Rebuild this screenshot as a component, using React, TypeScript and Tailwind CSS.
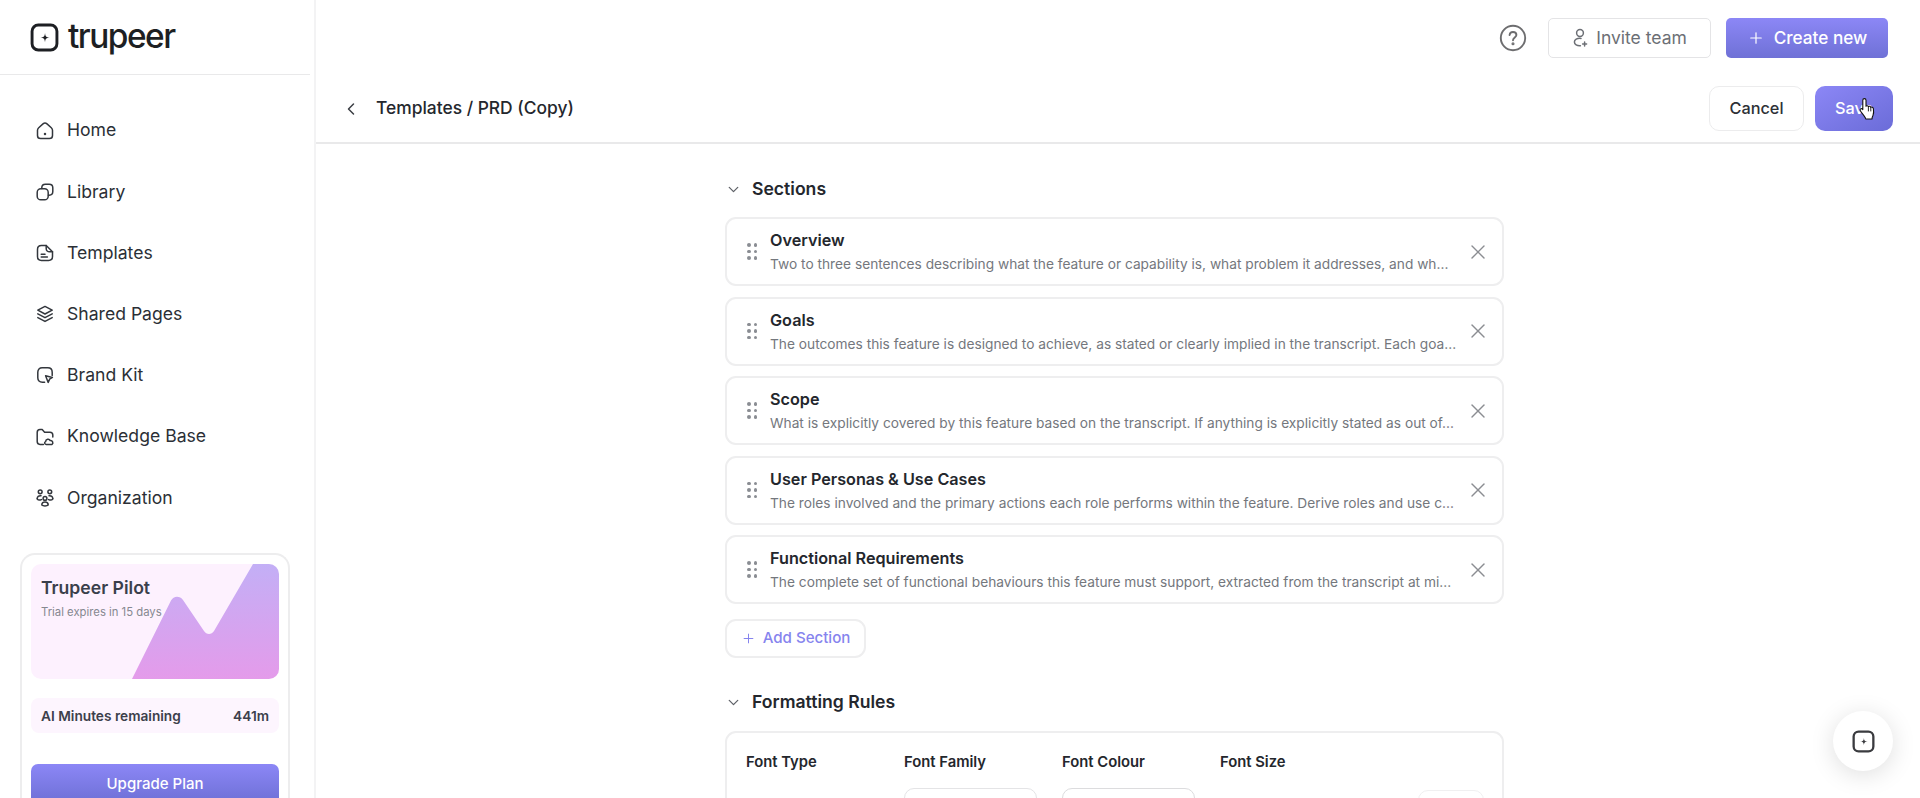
import { ChevronDown, ChevronLeft, Plus, X } from 'lucide-react';
import type { ReactNode } from 'react';

const iconProps = {
  fill: 'none',
  stroke: 'currentColor',
  strokeWidth: 1.5,
  strokeLinecap: 'round' as const,
  strokeLinejoin: 'round' as const,
};

function NavIcon({ children }: { children: ReactNode }) {
  return (
    <svg viewBox="0 0 20 20" className="h-5 w-5 shrink-0 text-[#33373d]" {...iconProps}>
      {children}
    </svg>
  );
}

const navItems: { label: string; icon: ReactNode }[] = [
  {
    label: 'Home',
    icon: (
      <>
        <path d="M2.5 9.2C2.5 8.2 2.9 7.4 3.7 6.7L8 2.9C9.2 1.9 10.8 1.9 12 2.9L16.3 6.7C17.1 7.4 17.5 8.2 17.5 9.2V14.5C17.5 16.5 16.4 17.6 14.4 17.6H5.6C3.6 17.6 2.5 16.5 2.5 14.5Z" />
        <circle cx="10" cy="13" r="0.5" fill="currentColor" />
      </>
    ),
  },
  {
    label: 'Library',
    icon: (
      <>
        <rect x="2.2" y="6.8" width="11" height="11" rx="3.6" />
        <path d="M6.8 6.6V5.8C6.8 3.6 8.4 2.2 10.4 2.2H14.2C16.3 2.2 17.8 3.7 17.8 5.8V9.6C17.8 11.6 16.4 13.2 14.2 13.2H13.4" />
      </>
    ),
  },
  {
    label: 'Templates',
    icon: (
      <>
        <path d="M2.5 6.4C2.5 4 4 2.5 6.4 2.5H11.2L17.5 8.8V13.6C17.5 16 16 17.5 13.6 17.5H6.4C4 17.5 2.5 16 2.5 13.6Z" />
        <path d="M11.2 2.5V5.4C11.2 7.6 12.6 8.8 14.6 8.8H17.5" />
        <path d="M6.2 11.2H10M6.2 14H12.4" />
      </>
    ),
  },
  {
    label: 'Shared Pages',
    icon: (
      <>
        <path d="M10 2.4L17.2 6.2L10 10L2.8 6.2Z" />
        <path d="M2.8 9.9L10 13.7L17.2 9.9" />
        <path d="M2.8 13.6L10 17.4L17.2 13.6" />
      </>
    ),
  },
  {
    label: 'Brand Kit',
    icon: (
      <>
        <path d="M9.6 17.2H7.4C4.4 17.2 2.8 15.6 2.8 12.8V7.2C2.8 4.4 4.4 2.8 7.2 2.8H12.8C15.6 2.8 17.2 4.4 17.2 7.2V10.4" />
        <path d="M10.6 10.8L17.4 12.4L14.6 14.2L13.2 17.4Z" />
      </>
    ),
  },
  {
    label: 'Knowledge Base',
    icon: (
      <>
        <path d="M8.4 17.4H5C3.4 17.4 2.2 16.2 2.2 14.6V5.4C2.2 3.8 3.4 2.6 5 2.6H7.2L9.6 5.2H15C16.6 5.2 17.8 6.4 17.8 8V10" />
        <path d="M11.2 17.4C9.4 17.4 9 15.2 10.6 14.6C10.8 12 14.2 11.4 15.2 13.6C17.4 13.2 18.8 16 17 17.4Z" />
      </>
    ),
  },
  {
    label: 'Organization',
    icon: (
      <>
        <circle cx="5.2" cy="3.8" r="1.9" />
        <circle cx="14.8" cy="3.8" r="1.9" />
        <circle cx="10" cy="10.4" r="1.9" />
        <path d="M2.2 10.8C2.2 8.4 3.6 7.6 6 7.8" />
        <path d="M17.8 10.8C17.8 8.4 16.4 7.6 14 7.8" />
        <path d="M2.2 10.8C3 12 5 12.2 6.4 11.6" />
        <path d="M17.8 10.8C17 12 15 12.2 13.6 11.6" />
        <path d="M6.8 17C6.8 14.8 8.2 14 10 14C11.8 14 13.2 14.8 13.2 17C12 18.2 8 18.2 6.8 17Z" />
      </>
    ),
  },
];

const sections = [
  {
    title: 'Overview',
    text: 'Two to three sentences describing what the feature or capability is, what problem it addresses, and wh...',
  },
  {
    title: 'Goals',
    text: 'The outcomes this feature is designed to achieve, as stated or clearly implied in the transcript. Each goa...',
  },
  {
    title: 'Scope',
    text: 'What is explicitly covered by this feature based on the transcript. If anything is explicitly stated as out of...',
  },
  {
    title: 'User Personas & Use Cases',
    text: 'The roles involved and the primary actions each role performs within the feature. Derive roles and use c...',
  },
  {
    title: 'Functional Requirements',
    text: 'The complete set of functional behaviours this feature must support, extracted from the transcript at mi...',
  },
];

function LogoMark({ className, weight }: { className: string; weight: number }) {
  return (
    <svg viewBox="0 0 28 28" className={className} fill="none">
      <rect x="2" y="2" width="24" height="24" rx="6" stroke="currentColor" strokeWidth={weight} />
      <path
        d="M14.5 9.6C14.9 13 15.6 13.7 19 14.1C15.6 14.5 14.9 15.2 14.5 18.6C14.1 15.2 13.4 14.5 10 14.1C13.4 13.7 14.1 13 14.5 9.6Z"
        fill="currentColor"
      />
    </svg>
  );
}

function DragDots() {
  return (
    <div className="grid shrink-0 grid-cols-2 gap-x-[3px] gap-y-[3px]">
      {[0, 1, 2, 3, 4, 5].map((i) => (
        <span key={i} className="h-[3.5px] w-[3.5px] rounded-full bg-[#8a8d93]" />
      ))}
    </div>
  );
}

function Sidebar() {
  return (
    <aside className="flex h-full w-[316px] shrink-0 flex-col border-r-2 border-[#f3f3f4]">
      <div className="mr-[4px] flex h-[75px] shrink-0 items-center gap-[9px] border-b border-[#e9e9ea] pl-[30px]">
        <LogoMark className="h-[29px] w-[29px] text-[#1d1f23]" weight={2.8} />
        <span className="text-[33.4px] leading-none font-medium tracking-[-0.045em] text-[#1d1f23]">trupeer</span>
      </div>
      <nav className="flex flex-col pt-[25px]">
        {navItems.map((item) => (
          <div key={item.label} className="flex h-[61.2px] items-center gap-[12px] pl-[35px] text-[17.6px] text-[#2b2f36]">
            <NavIcon>{item.icon}</NavIcon>
            {item.label}
          </div>
        ))}
      </nav>
      <div className="mt-[25px] mr-[24px] ml-[20px] flex-1 rounded-t-[15px] border-2 border-b-0 border-[#ededee] px-[9px] pt-[9px]">
        <div className="relative h-[115px] overflow-hidden rounded-[10px] bg-[#fdf1fe]">
          <svg viewBox="0 0 248 115" className="absolute inset-0 h-full w-full">
            <defs>
              <linearGradient id="pilot" x1="0" y1="0" x2="0" y2="1">
                <stop offset="0" stopColor="#c3aff6" />
                <stop offset="1" stopColor="#e49bea" />
              </linearGradient>
            </defs>
            <path
              d="M101 115L140 36.5C142.5 31.5 149 31.5 152 36L173 67C175.5 71 180.5 71 183 67L222 0H248V115Z"
              fill="url(#pilot)"
            />
          </svg>
          <div className="relative pt-[13px] pl-[10px]">
            <div className="text-[17.6px] leading-[22px] font-semibold text-[#3a3f4b]">Trupeer Pilot</div>
            <div className="mt-[6px] text-[11.3px] leading-[15px] text-[#858890]">Trial expires in 15 days</div>
          </div>
        </div>
        <div className="mt-[19px] flex h-[35px] items-center justify-between rounded-[8px] bg-[#fdf5fe] px-[10px] text-[13.7px] font-semibold text-[#3c404b]">
          <span>AI Minutes remaining</span>
          <span>441m</span>
        </div>
        <div className="mt-[31px] flex h-[40px] items-center justify-center rounded-t-[7px] bg-gradient-to-b from-[#8c87f6] to-[#6d6fd5] text-[15px] font-medium text-white">
          Upgrade Plan
        </div>
      </div>
    </aside>
  );
}

function TopBar() {
  return (
    <div className="flex h-[40px] shrink-0 items-center justify-end gap-[15px] pr-[32px]">
      <svg viewBox="0 0 28 28" className="mr-[6px] h-[28px] w-[28px] text-[#6d6d6f]" {...iconProps} strokeWidth={1.9}>
        <circle cx="14" cy="14" r="12.2" />
        <path d="M10.6 11C10.8 9 12.2 8 14 8C16 8 17.4 9.2 17.4 11C17.4 13.4 14 13.6 14 16.2" />
        <circle cx="14" cy="19.8" r="0.6" fill="currentColor" />
      </svg>
      <button className="flex h-[40px] w-[163px] items-center justify-center gap-[8px] rounded-[5px] border border-[#e4e4e6] bg-white text-[17.5px] text-[#6c6f75]">
        <svg viewBox="0 0 16 20" className="h-[20px] w-[16px]" {...iconProps}>
          <circle cx="8" cy="5" r="3.4" />
          <path d="M9 10.4C5 10 2.4 11.6 2.4 14C2.4 16.6 5 18 8.4 17.8" />
          <path d="M12.6 14V18M10.6 16H14.6" />
        </svg>
        Invite team
      </button>
      <button className="flex h-[40px] w-[162px] items-center justify-center gap-[9px] rounded-[5px] bg-gradient-to-b from-[#8c87f6] to-[#6f71d6] text-[17.2px] font-medium text-white">
        <Plus className="h-[18px] w-[18px]" strokeWidth={1.6} />
        Create new
      </button>
    </div>
  );
}

function PageHeader() {
  return (
    <div className="flex h-[86px] shrink-0 items-start justify-between border-b-2 border-[#e9e9ea] pt-[28px] pr-[27px] pl-[25px]">
      <div className="flex h-[45px] items-center gap-[15px] text-[17.4px] font-medium text-[#24272d]">
        <ChevronLeft className="h-[20px] w-[20px] text-[#3b3e44]" strokeWidth={1.8} />
        Templates / PRD (Copy)
      </div>
      <div className="flex gap-[11px]">
        <button className="flex h-[45px] w-[95px] items-center justify-center rounded-[10px] border border-[#ececed] bg-white text-[16.3px] font-medium text-[#2d3036]">
          Cancel
        </button>
        <button className="relative flex h-[45px] w-[78px] items-center justify-center rounded-[10px] bg-gradient-to-br from-[#8c87f6] to-[#6b6cd8] text-[16.3px] font-medium text-white">
          Save
          {/* mouse pointer caught in the recording */}
          <svg viewBox="0 0 18 24" className="absolute top-[11px] left-[44px] h-[24px] w-[18px]">
            <path
              d="M5.4 1.6C6.4 1.6 7 2.3 7 3.2V9.2C7.4 8.6 9 8.6 9.4 9.6C10 9 11.4 9.2 11.8 10.2C12.6 9.8 14.2 10.2 14.4 11.6C14.7 13.8 14.8 16.4 14 18.4C13.4 20 13 20.6 13 22H6.8C6.6 20.6 5.6 19.6 4.4 18C3.2 16.4 1.8 14.6 1.2 13.4C0.6 12.2 2.2 11 3.4 12L3.8 12.6V3.2C3.8 2.3 4.4 1.6 5.4 1.6Z"
              fill="#fff"
              stroke="#111"
              strokeWidth="1.1"
              strokeLinejoin="round"
            />
            <path d="M9.4 10V14M11.8 10.4V14" stroke="#111" strokeWidth="0.9" strokeLinecap="round" />
          </svg>
        </button>
      </div>
    </div>
  );
}

function SectionTitle({ title }: { title: string }) {
  return (
    <div className="flex h-[24px] items-center gap-[10px] text-[17.6px] font-semibold text-[#24272d]">
      <ChevronDown className="h-[17px] w-[17px] text-[#5f6268]" strokeWidth={1.8} />
      {title}
    </div>
  );
}

function Content() {
  return (
    <div className="ml-[409px] w-[779px] pt-[33px]">
      <SectionTitle title="Sections" />
      <div className="mt-[16px] flex flex-col gap-[10.5px]">
        {sections.map((s) => (
          <div key={s.title} className="flex h-[69px] items-center rounded-[11px] border-2 border-[#eeeeef] bg-white pr-[12px] pl-[20px]">
            <DragDots />
            <div className="ml-[13px] min-w-0 flex-1">
              <div className="text-[16.2px] leading-[20px] font-semibold text-[#24272d]">{s.title}</div>
              <div className="mt-[6px] text-[13.72px] leading-[17px] whitespace-nowrap text-[#74777d]">{s.text}</div>
            </div>
            <X className="h-[24px] w-[24px] shrink-0 text-[#8b8d92]" strokeWidth={1.4} />
          </div>
        ))}
      </div>
      <button className="mt-[15px] flex h-[39px] w-[141px] items-center justify-center gap-[7px] rounded-[11px] border-2 border-[#eeeeef] text-[15.1px] font-medium text-[#8684ee]">
        <Plus className="h-[15px] w-[15px]" strokeWidth={1.6} />
        Add Section
      </button>
      <div className="mt-[32px]">
        <SectionTitle title="Formatting Rules" />
      </div>
      <div className="mt-[17px] rounded-[11px] border-2 border-[#eeeeef] pt-[19px] pl-[19px]">
        <div className="grid grid-cols-[158px_158px_158px_198px_1fr] text-[14.8px] leading-[20px] font-semibold text-[#24272d]">
          <span>Font Type</span>
          <span>Font Family</span>
          <span>Font Colour</span>
          <span>Font Size</span>
          <span />
        </div>
        <div className="mt-[16px] grid grid-cols-[158px_158px_158px_198px_1fr] items-start">
          <span />
          <div className="h-[60px] w-[133px] rounded-[10px] border border-[#e4e4e6]" />
          <div className="h-[60px] w-[133px] rounded-[10px] border border-[#dcdcde]" />
          <span />
          <div className="mt-[2px] h-[60px] w-[66px] rounded-[10px] border border-[#f0f0f1]" />
        </div>
      </div>
    </div>
  );
}

export default function App() {
  return (
    <div className="relative flex h-[798px] w-[1920px] overflow-hidden bg-white font-['Inter',sans-serif]">
      <Sidebar />
      <main className="flex min-w-0 flex-1 flex-col pt-[18px]">
        <TopBar />
        <PageHeader />
        <Content />
      </main>
      <div className="absolute top-[711px] left-[1833px] flex h-[60px] w-[60px] items-center justify-center rounded-full bg-white shadow-[0_4px_24px_rgba(0,0,0,0.13)]">
        <LogoMark className="h-[23px] w-[23px] text-[#3a3b3f]" weight={2.8} />
      </div>
    </div>
  );
}
